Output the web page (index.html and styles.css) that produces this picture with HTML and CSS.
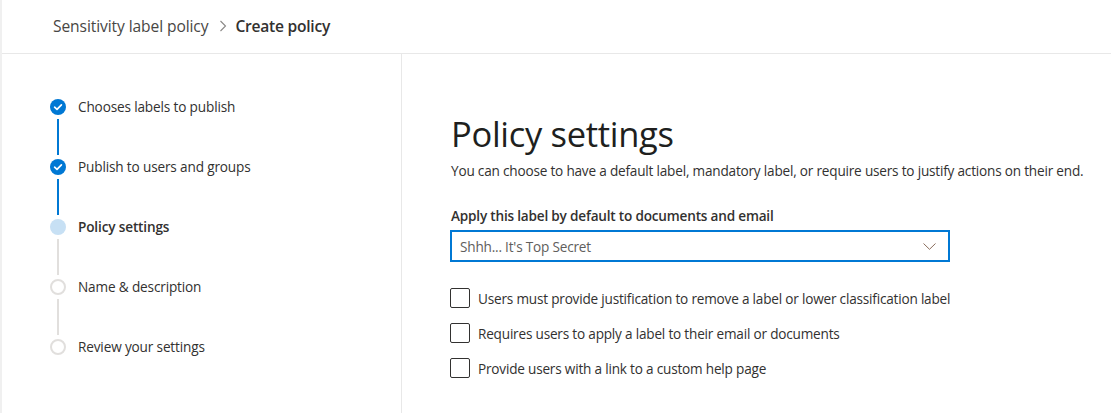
FILE: index.html
```html
<!DOCTYPE html>
<html lang="en">
<head>
<meta charset="utf-8">
<title>Create policy</title>
<link rel="stylesheet" href="styles.css">
</head>
<body>
<div class="app">
  <header class="header">
    <nav class="breadcrumb">
      <span class="crumb">Sensitivity label policy</span>
      <svg class="crumb-sep" width="8" height="12" viewBox="0 0 8 12"><path d="M1.5 1 L6.5 6 L1.5 11" fill="none" stroke="#8a8886" stroke-width="1.1"/></svg>
      <span class="crumb current">Create policy</span>
    </nav>
  </header>
  <div class="main">
    <aside class="wizard">
      <ol class="steps">
        <li class="step done">
          <div class="marker">
            <span class="dot"><svg width="16" height="16" viewBox="0 0 16 16"><circle cx="8" cy="8" r="8" fill="#0078d4"/><path d="M4.6 8.2 L7 10.4 L11.4 5.9" fill="none" stroke="#fff" stroke-width="1.7" stroke-linecap="round" stroke-linejoin="round"/></svg></span>
            <span class="line"></span>
          </div>
          <span class="step-label">Chooses labels to publish</span>
        </li>
        <li class="step done">
          <div class="marker">
            <span class="dot"><svg width="16" height="16" viewBox="0 0 16 16"><circle cx="8" cy="8" r="8" fill="#0078d4"/><path d="M4.6 8.2 L7 10.4 L11.4 5.9" fill="none" stroke="#fff" stroke-width="1.7" stroke-linecap="round" stroke-linejoin="round"/></svg></span>
            <span class="line"></span>
          </div>
          <span class="step-label">Publish to users and groups</span>
        </li>
        <li class="step current">
          <div class="marker">
            <span class="dot"></span>
            <span class="line"></span>
          </div>
          <span class="step-label">Policy settings</span>
        </li>
        <li class="step">
          <div class="marker">
            <span class="dot"></span>
            <span class="line"></span>
          </div>
          <span class="step-label">Name &amp; description</span>
        </li>
        <li class="step last">
          <div class="marker">
            <span class="dot"></span>
          </div>
          <span class="step-label">Review your settings</span>
        </li>
      </ol>
    </aside>
    <section class="content">
      <h1 class="title">Policy settings</h1>
      <p class="desc">You can choose to have a default label, mandatory label, or require users to justify actions on their end.</p>
      <label class="field-label">Apply this label by default to documents and email</label>
      <div class="dropdown">
        <span class="dropdown-value">Shhh... It's Top Secret</span>
        <svg class="chevron" width="13" height="7" viewBox="0 0 13 7"><path d="M0.5 0.5 L6.5 6.3 L12.5 0.5" fill="none" stroke="#8a6d5c" stroke-width="1"/></svg>
      </div>
      <div class="checks">
        <label class="check"><span class="box"></span><span>Users must provide justification to remove a label or lower classification label</span></label>
        <label class="check"><span class="box"></span><span>Requires users to apply a label to their email or documents</span></label>
        <label class="check"><span class="box"></span><span>Provide users with a link to a custom help page</span></label>
      </div>
    </section>
  </div>
</div>
</body>
</html>
```
FILE: styles.css
```css
* { box-sizing: border-box; }
html, body { margin: 0; padding: 0; background: #fff; }
body {
  font-family: "Open Sans", "Noto Sans", sans-serif;
  color: #323130;
  font-size: 14px;
}
.app {
  border-left: 2px solid #f0f0f0;
  min-height: 413px;
}
.header {
  height: 54px;
  border-bottom: 1px solid #e8e8e8;
  display: flex;
  align-items: center;
  padding-left: 51px;
}
.breadcrumb {
  display: flex;
  align-items: center;
  font-size: 15.6px;
  letter-spacing: -0.1px;
  padding-bottom: 1px;
}
.crumb { color: #484644; }
.crumb.current { color: #323130; font-weight: 600; letter-spacing: -0.25px; }
.crumb-sep { margin: 0 8px 0 11px; }
.main {
  display: flex;
  min-height: 359px;
}
.wizard {
  width: 400px;
  border-right: 1px solid #e8e8e8;
  padding: 45px 0 0 48px;
}
.steps { list-style: none; margin: 0; padding: 0; }
.step {
  display: flex;
  gap: 12px;
  height: 60px;
}
.step.last { height: 40px; }
.marker {
  width: 16px;
  display: flex;
  flex-direction: column;
  align-items: center;
}
.dot {
  width: 16px;
  height: 16px;
  border-radius: 50%;
  border: 2px solid #e1dfdd;
  flex: none;
  display: block;
}
.step.done .dot { border: 0; }
.step.done .dot svg { display: block; }
.step.current .dot { border: 0; background: #c7e0f4; }
.line {
  width: 2px;
  flex: 1;
  margin: 4px 0;
  background: #e1dfdd;
}
.step.done .line { background: #0078d4; }
.step-label {
  line-height: 16px;
  font-size: 13.6px;
  letter-spacing: -0.15px;
  color: #323130;
}
.step.current .step-label { font-weight: 600; }
.content {
  flex: 1;
  padding: 0 0 0 49px;
}
.title {
  margin: 58px 0 0;
  font-size: 34.5px;
  font-weight: 400;
  line-height: 44px;
  letter-spacing: -0.3px;
  color: #201f1e;
}
.desc {
  margin: 5px 0 0;
  font-size: 13.6px;
  line-height: 20px;
  letter-spacing: -0.2px;
  color: #323130;
}
.field-label {
  display: block;
  margin-top: 25px;
  font-size: 13.6px;
  line-height: 20px;
  font-weight: 600;
  letter-spacing: -0.2px;
}
.dropdown {
  margin-top: 4px;
  width: 500px;
  height: 32px;
  margin-left: -1px;
  border: 2px solid #0078d4;
  display: flex;
  align-items: center;
  justify-content: space-between;
  padding: 0 12px 0 8px;
}
.dropdown-value {
  font-size: 13.6px;
  letter-spacing: -0.2px;
  color: #605e5c;
}
.chevron { display: block; }
.checks {
  margin-top: 26px;
  display: flex;
  flex-direction: column;
  gap: 15px;
}
.check {
  display: flex;
  align-items: center;
  gap: 8px;
  height: 20px;
  margin-left: -1px;
  font-size: 13.6px;
  letter-spacing: -0.2px;
}
.box {
  width: 20px;
  height: 20px;
  border: 1px solid #323130;
  border-radius: 2px;
  flex: none;
}
```
